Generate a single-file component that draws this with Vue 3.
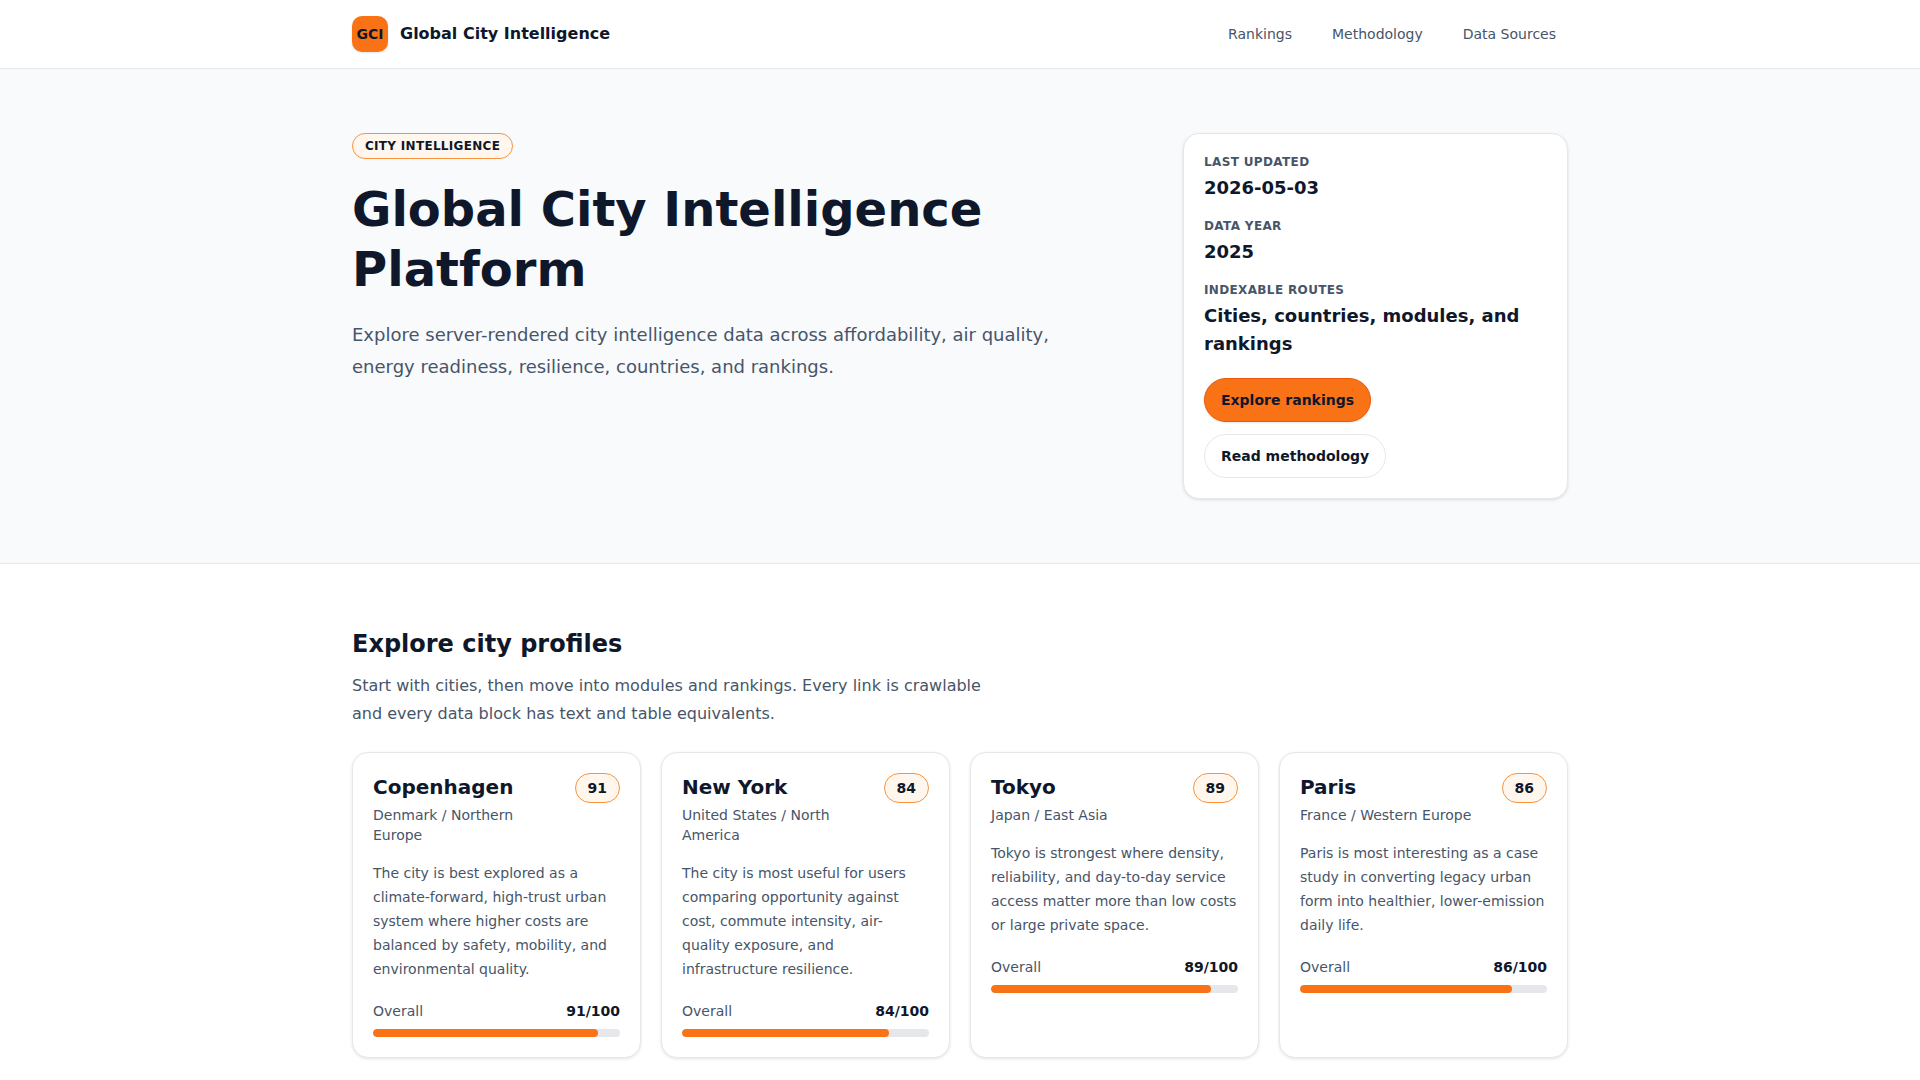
<script setup>
const cities = [
  { name: 'Copenhagen', meta: 'Denmark / Northern Europe', score: 91, text: 'The city is best explored as a climate-forward, high-trust urban system where higher costs are balanced by safety, mobility, and environmental quality.' },
  { name: 'New York', meta: 'United States / North America', score: 84, text: 'The city is most useful for users comparing opportunity against cost, commute intensity, air-quality exposure, and infrastructure resilience.' },
  { name: 'Tokyo', meta: 'Japan / East Asia', score: 89, text: 'Tokyo is strongest where density, reliability, and day-to-day service access matter more than low costs or large private space.' },
  { name: 'Paris', meta: 'France / Western Europe', score: 86, text: 'Paris is most interesting as a case study in converting legacy urban form into healthier, lower-emission daily life.' },
]
const facts = [
  { label: 'Last updated', value: '2026-05-03' },
  { label: 'Data year', value: '2025' },
  { label: 'Indexable routes', value: 'Cities, countries, modules, and rankings' },
]
</script>

<template>
  <div class="page">
    <header class="topbar">
      <div class="wrap topbar-in">
        <a class="brand"><span class="logo">GCI</span><span class="brand-name">Global City Intelligence</span></a>
        <nav class="nav"><a>Rankings</a><a>Methodology</a><a>Data Sources</a></nav>
      </div>
    </header>
    <section class="hero">
      <div class="wrap hero-in">
        <div class="hero-copy">
          <span class="eyebrow">CITY INTELLIGENCE</span>
          <h1>Global City Intelligence Platform</h1>
          <p>Explore server-rendered city intelligence data across affordability, air quality, energy readiness, resilience, countries, and rankings.</p>
        </div>
        <aside class="panel">
          <div v-for="f in facts" :key="f.label" class="fact">
            <div class="fact-label">{{ f.label }}</div>
            <div class="fact-value">{{ f.value }}</div>
          </div>
          <div class="actions">
            <a class="btn primary">Explore rankings</a>
            <a class="btn">Read methodology</a>
          </div>
        </aside>
      </div>
    </section>
    <section class="profiles">
      <div class="wrap">
        <h2>Explore city profiles</h2>
        <p class="lead">Start with cities, then move into modules and rankings. Every link is crawlable and every data block has text and table equivalents.</p>
        <div class="grid">
          <article v-for="c in cities" :key="c.name" class="card">
            <div class="card-head">
              <div>
                <h3>{{ c.name }}</h3>
                <div class="meta">{{ c.meta }}</div>
              </div>
              <span class="score">{{ c.score }}</span>
            </div>
            <p class="desc">{{ c.text }}</p>
            <div class="row"><span>Overall</span><strong>{{ c.score }}/100</strong></div>
            <div class="track"><div class="fill" :style="{ width: c.score + '%' }"></div></div>
          </article>
        </div>
      </div>
    </section>
  </div>
</template>

<style>
html, body { margin: 0; background: #fff; }
</style>

<style scoped>
.page { font-family: "DejaVu Sans", sans-serif; color: #0f172a; background: #fff; min-height: 1080px; }
.wrap { width: 1216px; margin: 0 auto; }
.topbar { background: #fff; border-bottom: 1px solid #e5e7eb; }
.topbar-in { height: 68px; display: flex; align-items: center; justify-content: space-between; }
.brand { display: flex; align-items: center; gap: 12px; font-size: 16px; font-weight: 700; }
.brand-name { position: relative; top: -1px; }
.logo { width: 36px; height: 36px; border-radius: 10px; background: #f97316; display: flex; align-items: center; justify-content: center; font-size: 14px; font-weight: 700; box-shadow: 0 1px 2px rgba(15, 23, 42, .12); }
.nav { display: flex; gap: 16px; font-size: 14px; color: #475569; }
.nav a { padding: 8px 12px; }
.hero { background: #f8fafc; border-bottom: 1px solid #e5e7eb; padding: 64px 0; }
.hero-in { display: flex; justify-content: space-between; align-items: flex-start; }
.hero-copy { width: 720px; }
.eyebrow { display: block; width: max-content; font-size: 12px; font-weight: 700; letter-spacing: .3px; line-height: 16px; padding: 4px 12px; border: 1px solid #fb923c; border-radius: 999px; background: #fff7ed; }
h1 { margin: 20px 0 0; font-size: 48px; line-height: 60px; font-weight: 700; }
.hero-copy p { margin: 20px 0 0; font-size: 18px; line-height: 32px; color: #475569; }
.panel { width: 385px; box-sizing: border-box; padding: 20px; background: #fff; border: 1px solid #e5e7eb; border-radius: 16px; box-shadow: 0 1px 3px rgba(15, 23, 42, .12); }
.fact { margin-bottom: 16px; }
.fact-label { font-size: 12px; line-height: 16px; font-weight: 700; letter-spacing: .03em; text-transform: uppercase; color: #475569; }
.fact-value { margin-top: 4px; font-size: 18px; line-height: 28px; font-weight: 700; }
.actions { display: flex; flex-wrap: wrap; gap: 12px; margin-top: 20px; }
.btn { display: inline-block; padding: 12px 16px; font-size: 14px; line-height: 18px; font-weight: 700; border: 1px solid #e5e7eb; border-radius: 999px; background: #fff; }
.btn.primary { background: #f97316; border-color: #ea580c; box-shadow: 0 1px 2px rgba(15, 23, 42, .12); }
.profiles { padding: 64px 0 0; }
h2 { margin: 0; font-size: 24px; line-height: 32px; font-weight: 700; }
.lead { margin: 12px 0 0; width: 660px; font-size: 16px; line-height: 28px; color: #475569; }
.grid { display: grid; grid-template-columns: repeat(4, 1fr); gap: 20px; margin-top: 24px; }
.card { padding: 20px; background: #fff; border: 1px solid #e5e7eb; border-radius: 16px; box-shadow: 0 1px 3px rgba(15, 23, 42, .12); }
.card-head { display: flex; justify-content: space-between; align-items: flex-start; gap: 12px; }
h3 { margin: 0 0 4px; font-size: 20px; line-height: 28px; font-weight: 700; }
.meta { font-size: 14px; line-height: 20px; color: #475569; }
.score { flex: none; font-size: 14px; line-height: 18px; font-weight: 700; padding: 5px 12px; border: 1px solid #fb923c; border-radius: 999px; background: #fff7ed; }
.desc { margin: 16px 0 0; font-size: 14px; line-height: 24px; color: #475569; }
.row { display: flex; justify-content: space-between; margin-top: 20px; font-size: 14px; line-height: 20px; color: #475569; }
.row strong { color: #0f172a; }
.track { height: 8px; margin-top: 8px; border-radius: 999px; background: #e5e7eb; overflow: hidden; }
.fill { height: 100%; background: #f97316; border-radius: 999px; }
</style>
